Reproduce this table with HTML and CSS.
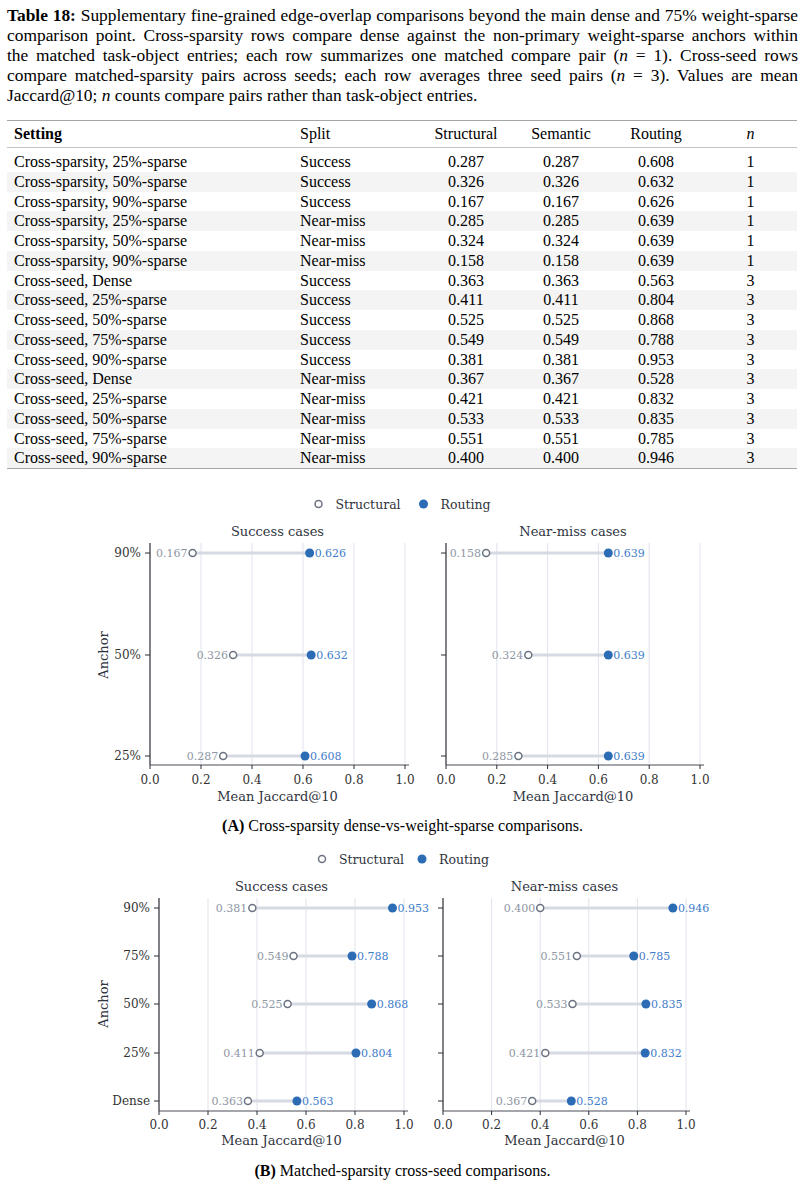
FILE: index.html
```html
<!DOCTYPE html>
<html>
<head>
    <title>Table 18 - Edge-overlap comparisons</title>
    <link rel="stylesheet" href="styles.css">
</head>
<body>
    <div id="page">
        <p class="table-caption"><b>Table 18:</b> Supplementary fine-grained edge-overlap comparisons beyond the main dense and 75% weight-sparse comparison point. Cross-sparsity rows compare dense against the non-primary weight-sparse anchors within the&nbsp;matched task-object entries; each row summarizes one matched compare pair (<i>n</i> = 1). Cross-seed rows compare matched-sparsity pairs across seeds; each row averages three seed pairs (<i>n</i> = 3). Values are mean Jaccard@10; <i>n</i> counts compare pairs rather than task-object entries.</p>

        <table id="results">
            <colgroup>
                <col class="c-setting">
                <col class="c-split">
                <col class="c-num">
                <col class="c-num2">
                <col class="c-num">
                <col class="c-n">
            </colgroup>
            <thead>
                <tr>
                    <th class="setting"><b>Setting</b></th>
                    <th class="split">Split</th>
                    <th>Structural</th>
                    <th>Semantic</th>
                    <th>Routing</th>
                    <th><i>n</i></th>
                </tr>
            </thead>
            <tbody>
                <tr><td class="setting">Cross-sparsity, 25%-sparse</td><td class="split">Success</td><td>0.287</td><td>0.287</td><td>0.608</td><td>1</td></tr>
                <tr><td class="setting">Cross-sparsity, 50%-sparse</td><td class="split">Success</td><td>0.326</td><td>0.326</td><td>0.632</td><td>1</td></tr>
                <tr><td class="setting">Cross-sparsity, 90%-sparse</td><td class="split">Success</td><td>0.167</td><td>0.167</td><td>0.626</td><td>1</td></tr>
                <tr><td class="setting">Cross-sparsity, 25%-sparse</td><td class="split">Near-miss</td><td>0.285</td><td>0.285</td><td>0.639</td><td>1</td></tr>
                <tr><td class="setting">Cross-sparsity, 50%-sparse</td><td class="split">Near-miss</td><td>0.324</td><td>0.324</td><td>0.639</td><td>1</td></tr>
                <tr><td class="setting">Cross-sparsity, 90%-sparse</td><td class="split">Near-miss</td><td>0.158</td><td>0.158</td><td>0.639</td><td>1</td></tr>
                <tr><td class="setting">Cross-seed, Dense</td><td class="split">Success</td><td>0.363</td><td>0.363</td><td>0.563</td><td>3</td></tr>
                <tr><td class="setting">Cross-seed, 25%-sparse</td><td class="split">Success</td><td>0.411</td><td>0.411</td><td>0.804</td><td>3</td></tr>
                <tr><td class="setting">Cross-seed, 50%-sparse</td><td class="split">Success</td><td>0.525</td><td>0.525</td><td>0.868</td><td>3</td></tr>
                <tr><td class="setting">Cross-seed, 75%-sparse</td><td class="split">Success</td><td>0.549</td><td>0.549</td><td>0.788</td><td>3</td></tr>
                <tr><td class="setting">Cross-seed, 90%-sparse</td><td class="split">Success</td><td>0.381</td><td>0.381</td><td>0.953</td><td>3</td></tr>
                <tr><td class="setting">Cross-seed, Dense</td><td class="split">Near-miss</td><td>0.367</td><td>0.367</td><td>0.528</td><td>3</td></tr>
                <tr><td class="setting">Cross-seed, 25%-sparse</td><td class="split">Near-miss</td><td>0.421</td><td>0.421</td><td>0.832</td><td>3</td></tr>
                <tr><td class="setting">Cross-seed, 50%-sparse</td><td class="split">Near-miss</td><td>0.533</td><td>0.533</td><td>0.835</td><td>3</td></tr>
                <tr><td class="setting">Cross-seed, 75%-sparse</td><td class="split">Near-miss</td><td>0.551</td><td>0.551</td><td>0.785</td><td>3</td></tr>
                <tr><td class="setting">Cross-seed, 90%-sparse</td><td class="split">Near-miss</td><td>0.400</td><td>0.400</td><td>0.946</td><td>3</td></tr>
            </tbody>
        </table>
    </div>

    <figure class="fig fig-a">
        <svg id="fig-a" width="805" height="330" viewBox="0 480 805 330"></svg>
        <figcaption><b>(A)</b> Cross-sparsity dense-vs-weight-sparse comparisons.</figcaption>
    </figure>

    <figure class="fig fig-b">
        <svg id="fig-b" width="805" height="310" viewBox="0 845 805 310"></svg>
        <figcaption><b>(B)</b> Matched-sparsity cross-seed comparisons.</figcaption>
    </figure>

    <script>
        const NS = "http://www.w3.org/2000/svg";

        // small helper to create svg nodes
        function el(parent, tag, attrs, text) {
            const node = document.createElementNS(NS, tag);
            for (const key in attrs) node.setAttribute(key, attrs[key]);
            if (text !== undefined) node.textContent = text;
            parent.appendChild(node);
            return node;
        }

        function drawLegend(svg, y, openX, filledX) {
            el(svg, "circle", { cx: openX, cy: y, r: 3.5, class: "pt-open" });
            el(svg, "text", { x: openX + 17, y: y, class: "legend" }, "Structural");
            el(svg, "circle", { cx: filledX, cy: y, r: 4.5, class: "pt-filled" });
            el(svg, "text", { x: filledX + 17, y: y, class: "legend" }, "Routing");
        }

        // one dumbbell panel
        function drawPanel(svg, p) {
            const xAt = v => p.x0 + v * p.unit;

            // grid lines
            for (let i = 1; i <= 5; i++) {
                const x = xAt(i * 0.2);
                el(svg, "line", { x1: x, y1: p.top, x2: x, y2: p.bottom, class: "grid" });
            }

            // spines
            el(svg, "line", { x1: p.x0, y1: p.top, x2: p.x0, y2: p.bottom, class: "spine" });
            el(svg, "line", { x1: p.x0, y1: p.bottom, x2: xAt(1) + 4, y2: p.bottom, class: "spine-x" });

            // x ticks + labels
            for (let i = 0; i <= 5; i++) {
                const x = xAt(i * 0.2);
                el(svg, "line", { x1: x, y1: p.bottom, x2: x, y2: p.bottom + 4, class: "tick" });
                el(svg, "text", { x: x, y: p.tickY, class: "tick-label mid" }, (i * 0.2).toFixed(1));
            }
            el(svg, "text", { x: xAt(0.5), y: p.xlabelY, class: "axis-label mid" }, "Mean Jaccard@10");
            el(svg, "text", { x: xAt(0.5), y: p.titleY, class: "title mid" }, p.title);

            p.rows.forEach(row => {
                const [label, y, s, r] = row;
                el(svg, "line", { x1: p.x0 - 5, y1: y, x2: p.x0, y2: y, class: "tick" });
                if (p.rowLabels) {
                    el(svg, "text", { x: p.x0 - 9, y: y, class: "tick-label end" }, label);
                }
                el(svg, "line", { x1: xAt(s), y1: y, x2: xAt(r), y2: y, class: "bar" });
                el(svg, "circle", { cx: xAt(s), cy: y, r: 3.5, class: "pt-open" });
                el(svg, "circle", { cx: xAt(r), cy: y, r: 4.5, class: "pt-filled" });
                el(svg, "text", { x: xAt(s) - 5, y: y, class: "val val-s end" }, s.toFixed(3));
                el(svg, "text", { x: xAt(r) + 5, y: y, class: "val val-r" }, r.toFixed(3));
            });
        }

        function drawAnchor(svg, x, y) {
            el(svg, "text", { x: x, y: y, class: "axis-label mid", transform: "rotate(-90 " + x + " " + y + ")" }, "Anchor");
        }

        // Figure A: cross-sparsity
        const figA = document.getElementById("fig-a");
        drawLegend(figA, 505, 318.5, 423.5);
        drawAnchor(figA, 103, 656);
        drawPanel(figA, {
            x0: 150, unit: 255, top: 544, bottom: 766, tickY: 781, xlabelY: 797, titleY: 532,
            title: "Success cases", rowLabels: true,
            rows: [["90%", 554, 0.167, 0.626], ["50%", 656, 0.326, 0.632], ["25%", 757, 0.287, 0.608]]
        });
        drawPanel(figA, {
            x0: 446, unit: 254, top: 544, bottom: 766, tickY: 781, xlabelY: 797, titleY: 532,
            title: "Near-miss cases", rowLabels: false,
            rows: [["90%", 554, 0.158, 0.639], ["50%", 656, 0.324, 0.639], ["25%", 757, 0.285, 0.639]]
        });

        // Figure B: cross-seed
        const figB = document.getElementById("fig-b");
        drawLegend(figB, 860, 322, 422);
        drawAnchor(figB, 103, 1005);
        drawPanel(figB, {
            x0: 159, unit: 245, top: 899, bottom: 1112, tickY: 1126, xlabelY: 1141, titleY: 887,
            title: "Success cases", rowLabels: true,
            rows: [["90%", 909, 0.381, 0.953], ["75%", 957, 0.549, 0.788], ["50%", 1005, 0.525, 0.868],
                   ["25%", 1054, 0.411, 0.804], ["Dense", 1102, 0.363, 0.563]]
        });
        drawPanel(figB, {
            x0: 443, unit: 243, top: 899, bottom: 1112, tickY: 1126, xlabelY: 1141, titleY: 887,
            title: "Near-miss cases", rowLabels: false,
            rows: [["90%", 909, 0.400, 0.946], ["75%", 957, 0.551, 0.785], ["50%", 1005, 0.533, 0.835],
                   ["25%", 1054, 0.421, 0.832], ["Dense", 1102, 0.367, 0.528]]
        });
    </script>
</body>
</html>
```

FILE: styles.css
```css
body {
    margin: 0;
    background-color: #fff;
    color: #000;
    font-family: "Liberation Serif", "Times New Roman", serif;
}

#page {
    padding: 5px 7px 0 7px;
}

.table-caption {
    margin: 0;
    font-size: 17.4px;
    line-height: 20px;
    text-align: justify;
}

/* booktabs style table */
#results {
    width: 790px;
    margin-top: 15px;
    border-collapse: collapse;
    table-layout: fixed;
    font-size: 16px;
    border-top: 1.5px solid #a6a6a6;
    border-bottom: 1.5px solid #a6a6a6;
}

.c-setting { width: 293px; }
.c-split { width: 118px; }
.c-num { width: 96px; }
.c-num2 { width: 94px; }
.c-n { width: 93px; }

#results th {
    font-weight: normal;
    text-align: center;
    height: 26px;
    padding: 0;
    border-bottom: 1px solid #c4c4c4;
}

#results td {
    text-align: center;
    height: 19.75px;
    line-height: 19.75px;
    padding: 0;
    white-space: nowrap;
}

#results tbody tr:first-child td {
    padding-top: 4px;
}

#results tbody tr:nth-child(even) {
    background-color: #f4f4f4;
}

#results .setting {
    text-align: left;
    padding-left: 7px;
}

#results .split {
    text-align: left;
}

/* figures */
.fig {
    margin: 0;
}

.fig svg {
    display: block;
}

.fig-a {
    margin-top: 10px;
}

.fig-b {
    margin-top: 8px;
}

.fig figcaption {
    text-align: center;
    font-size: 16px;
    line-height: 20px;
    margin-top: 7px;
}

.fig svg text {
    font-family: "DejaVu Serif", serif;
    dominant-baseline: central;
    fill: #2f3440;
}

.fig .mid { text-anchor: middle; }
.fig .end { text-anchor: end; }

.fig .legend { font-size: 12.5px; }
.fig .title { font-size: 13px; }
.fig .axis-label { font-size: 13px; }
.fig .tick-label { font-size: 12px; fill: #333; }
.fig .val { font-size: 11px; }
.fig .val-s { fill: #8e96a3; }
.fig .val-r { fill: #3d7cc9; }

.grid {
    stroke: #dfe3ec;
    stroke-width: 1;
}

.spine {
    stroke: #2a2d35;
    stroke-width: 1.2;
}

.spine-x {
    stroke: #4a4e58;
    stroke-width: 1.2;
}

.tick {
    stroke: #2a2d35;
    stroke-width: 1;
}

.bar {
    stroke: #d5dae3;
    stroke-width: 3;
}

.pt-open {
    fill: #fff;
    stroke: #6b7280;
    stroke-width: 1.5;
}

.pt-filled {
    fill: #2b6cb5;
}
```
